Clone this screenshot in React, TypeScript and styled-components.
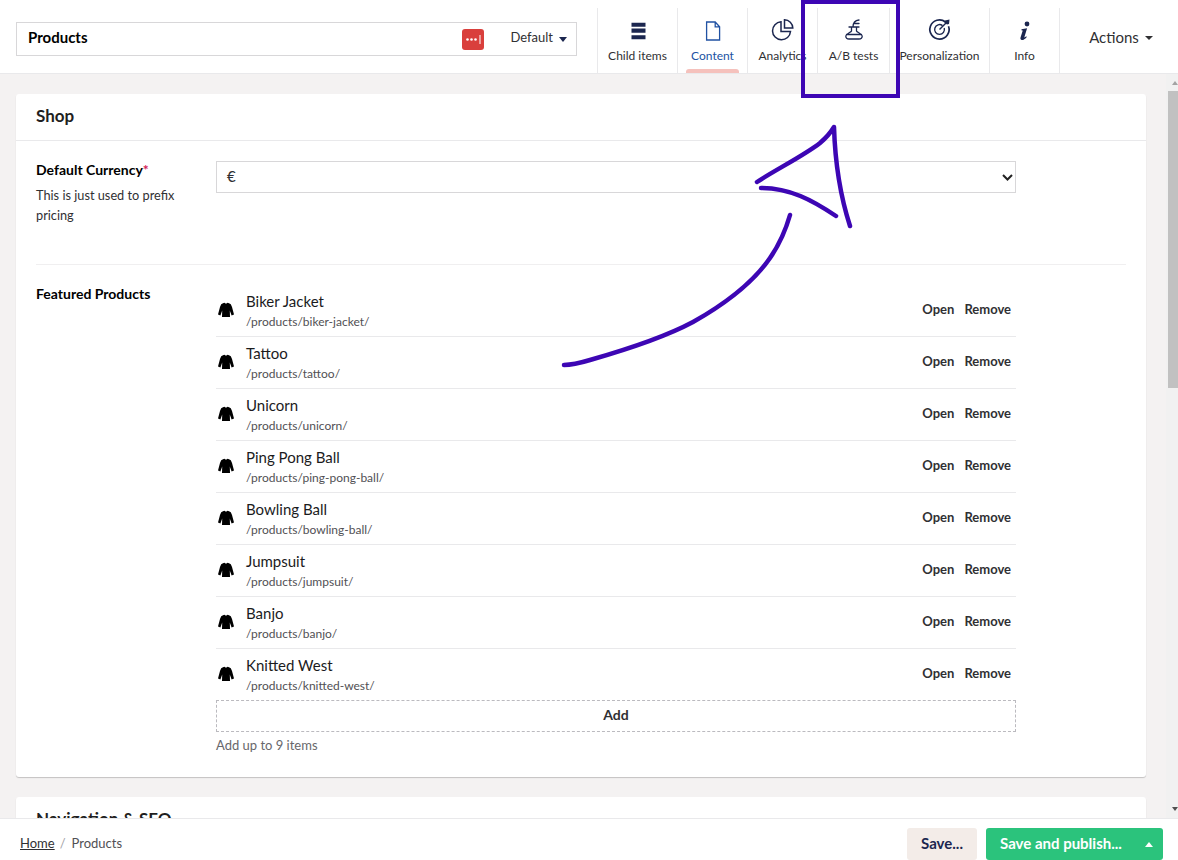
import React from "react";
import styled, { createGlobalStyle } from "styled-components";

const GlobalStyle = createGlobalStyle`
  html, body {
    margin: 0;
    height: 100%;
    overflow: hidden;
    background: #f4f2f2;
    font-family: Lato, "Open Sans", sans-serif;
    color: #1b264f;
  }
  * { box-sizing: border-box; }
`;

const Page = styled.div`
  position: relative;
  width: 1178px;
  height: 860px;
  display: flex;
  flex-direction: column;
  overflow: hidden;
`;

const Header = styled.header`
  flex: 0 0 74px;
  display: flex;
  background: #fff;
  border-bottom: 1px solid #e9e9eb;
`;

const NameBar = styled.div`
  width: 561px;
  height: 34px;
  margin: 22px 20px 0 16px;
  padding: 0 9px 0 11px;
  display: flex;
  align-items: center;
  border: 1px solid #d8d7d9;
`;

const NameText = styled.span`
  flex: 1;
  padding-bottom: 5px;
  font-size: 15px;
  font-weight: 700;
  color: #000;
`;

const LockBadge = styled.span`
  width: 22px;
  height: 21px;
  margin-right: 26px;
  border-radius: 3px;
  background: #d93f3c;
  display: flex;
  align-items: center;
  justify-content: center;
`;

const VariantText = styled.span`
  padding-bottom: 5px;
  font-size: 13px;
  color: #303033;
  margin-right: 6px;
`;

const Caret = styled.span<{ $up?: boolean; $color?: string }>`
  width: 0;
  height: 0;
  border-left: 4.5px solid transparent;
  border-right: 4.5px solid transparent;
  ${(p) => (p.$up ? "border-bottom" : "border-top")}: 5px solid ${(p) => p.$color || "#1b264f"};
`;

const ActionsCaret = styled(Caret)`
  margin: 2px 0 0 1px;
  border-left-width: 4px;
  border-right-width: 4px;
  border-top-width: 4px;
  border-top-color: #303033;
`;

const Tabs = styled.nav`
  display: flex;
  margin-top: 8px;
  height: 65px;
  border-left: 1px solid #e9e9eb;
`;

const Tab = styled.div<{ $width: number; $active?: boolean }>`
  position: relative;
  width: ${(p) => p.$width}px;
  display: flex;
  flex-direction: column;
  align-items: center;
  padding-top: 11px;
  border-right: 1px solid #e9e9eb;

  ${(p) =>
    p.$active &&
    `&::after {
      content: "";
      position: absolute;
      left: 8px;
      right: 8px;
      bottom: 0;
      height: 4px;
      background: #f5c1bc;
      border-radius: 3px 3px 0 0;
    }`}
`;

const TabIcon = styled.svg`
  width: 24px;
  height: 24px;
  display: block;
  overflow: visible;
`;

const TabLabel = styled.span`
  margin-top: 5px;
  font-size: 12px;
  line-height: 16px;
  white-space: nowrap;
  color: #303033;
`;

const ActiveLabel = styled(TabLabel)`
  color: #2152a3;
`;

const ActionsBox = styled.div`
  flex: 1;
  display: flex;
  align-items: center;
  justify-content: center;
  gap: 5px;
  padding-left: 4px;
  font-size: 15px;
  color: #303033;
`;

const Middle = styled.div`
  flex: 1;
  min-height: 0;
  display: flex;
`;

const Scroller = styled.main`
  flex: 1;
  min-width: 0;
  overflow: hidden;
  padding: 20px 20px 0 16px;
`;

const Scrollbar = styled.div`
  flex: 0 0 12px;
  display: flex;
  flex-direction: column;
  align-items: flex-end;
  background: #f1f1f1;
  padding-top: 7px;
`;

const ScrollThumb = styled.div`
  width: 10px;
  height: 297px;
  margin-top: 6px;
  background: #c1c1c1;
`;

const ScrollSpace = styled.div`
  flex: 1;
`;

const ScrollArrow = styled.span<{ $down?: boolean }>`
  width: 0;
  height: 0;
  border-left: 3.5px solid transparent;
  border-right: 3.5px solid transparent;
  ${(p) => (p.$down ? "border-top: 4px solid #505050; margin-bottom: 7px;" : "border-bottom: 4px solid #a3a3a3;")}
`;

const Card = styled.section`
  background: #fff;
  border-radius: 3px;
  box-shadow: 0 1px 1px rgba(0, 0, 0, 0.2);
  margin-bottom: 20px;
`;

const CardHeader = styled.div`
  height: 47px;
  padding: 0 20px 3px;
  display: flex;
  align-items: center;
  border-bottom: 1px solid #e9e9eb;
  font-size: 17px;
  font-weight: 700;
  color: #1f1f21;
`;

const CardBody = styled.div`
  padding: 20px 20px 23px;
`;

const Property = styled.div<{ $divided?: boolean }>`
  display: grid;
  grid-template-columns: 180px 800px;
  ${(p) => p.$divided && "padding-bottom: 39px; border-bottom: 1px solid #f0eff0; margin-bottom: 20px;"}
`;

const LabelCol = styled.div`
  padding-right: 30px;
`;

const PropLabel = styled.div`
  font-size: 14px;
  line-height: 18px;
  font-weight: 700;
  color: #000;
`;

const Required = styled.span`
  color: #d42054;
`;

const PropHelp = styled.div`
  margin-top: 6px;
  font-size: 12.75px;
  line-height: 20px;
  color: #303033;
`;

const SelectBox = styled.div`
  height: 32px;
  padding: 0 2px 0 10px;
  display: flex;
  align-items: center;
  justify-content: space-between;
  border: 1px solid #d8d7d9;
  font-size: 15px;
  color: #303033;
`;

const SelectValue = styled.span`
  padding-bottom: 2px;
`;

const ItemRow = styled.div`
  height: 52px;
  padding: 0 5px 4px 0;
  display: flex;
  align-items: center;
  border-bottom: 1px solid #e9e9eb;
  &:last-child {
    height: 51px;
    border-bottom: 0;
  }
`;

const ItemIcon = styled.svg`
  flex: 0 0 18px;
  width: 18px;
  height: 18px;
  margin: 0 11px 0 1px;
`;

const ItemText = styled.div`
  flex: 1;
  padding-top: 4px;
`;

const ItemName = styled.div`
  font-size: 15px;
  line-height: 22px;
  color: #1b1b1d;
`;

const ItemPath = styled.div`
  margin-top: 1px;
  font-size: 12px;
  line-height: 18px;
  color: #515054;
`;

const ItemAction = styled.span`
  margin-left: 10px;
  font-size: 13px;
  font-weight: 700;
  color: #303033;
`;

const AddButton = styled.div`
  height: 32px;
  padding-bottom: 3px;
  display: flex;
  align-items: center;
  justify-content: center;
  border: 1px dashed #bbbabf;
  font-size: 14px;
  font-weight: 700;
  color: #303033;
`;

const AddHelp = styled.div`
  margin-top: 4px;
  font-size: 13px;
  line-height: 18px;
  color: #68676b;
`;

const Footer = styled.footer`
  flex: 0 0 41px;
  padding: 9px 15px 0 20px;
  display: flex;
  background: #fff;
  border-top: 1px solid #e9e9eb;
`;

const Breadcrumbs = styled.div`
  flex: 1;
  display: flex;
  align-items: center;
  height: 30px;
  font-size: 13px;
  color: #515054;
`;

const Crumb = styled.a`
  color: #303033;
  text-decoration: underline;
`;

const CrumbSep = styled.span`
  margin: 0 6px 0 5px;
  color: #a2a1a6;
`;

const SaveButton = styled.div`
  width: 70px;
  height: 32px;
  margin-right: 9px;
  padding-bottom: 3px;
  display: flex;
  align-items: center;
  justify-content: center;
  background: #f3ece8;
  border-radius: 3px;
  font-size: 15px;
  font-weight: 700;
  color: #1b264f;
`;

const PublishButton = styled.div`
  width: 177px;
  height: 32px;
  padding: 0 10px 0 14px;
  display: flex;
  align-items: center;
  justify-content: space-between;
  background: #2bc37c;
  border-radius: 3px;
  font-size: 15px;
  font-weight: 700;
  color: #fff;
`;

const PublishText = styled.span`
  padding-bottom: 3px;
`;

const Annotation = styled.svg`
  position: absolute;
  left: 0;
  top: 0;
  width: 1178px;
  height: 860px;
  pointer-events: none;
`;

const Jacket = () => (
  <ItemIcon viewBox="0 0 18 18">
    <path
      fill="#000"
      d="M6 3.200L7.400 2.800L9 3.800L10.600 2.800L12 3.200L13.800 4.200L15 7L17 14.500L14.600 15.500L12.800 10.500L13 17L5 17L5.200 10.500L3.400 15.500L1 14.500L3 7L4.200 4.200Z"
    />
  </ItemIcon>
);

const items = [
  ["Biker Jacket", "/products/biker-jacket/"],
  ["Tattoo", "/products/tattoo/"],
  ["Unicorn", "/products/unicorn/"],
  ["Ping Pong Ball", "/products/ping-pong-ball/"],
  ["Bowling Ball", "/products/bowling-ball/"],
  ["Jumpsuit", "/products/jumpsuit/"],
  ["Banjo", "/products/banjo/"],
  ["Knitted West", "/products/knitted-west/"],
];

export default function App() {
  return (
    <Page>
      <GlobalStyle />
      <Header>
        <NameBar>
          <NameText>Products</NameText>
          <LockBadge>
            <svg width="17" height="9" viewBox="0 0 17 9">
              <circle cx="2.500" cy="4.500" r="1.300" fill="#fff" />
              <circle cx="6.500" cy="4.500" r="1.300" fill="#fff" />
              <circle cx="10.500" cy="4.500" r="1.300" fill="#fff" />
              <rect x="14.500" y="0" width="1" height="9" fill="#fff" />
            </svg>
          </LockBadge>
          <VariantText>Default</VariantText>
          <Caret />
        </NameBar>
        <Tabs>
          <Tab $width={80}>
            <TabIcon viewBox="0 0 24 24">
              <path fill="#1b264f" d="M5.500 3.700h14v4h-14zM5.500 9.600h14v4.100h-14zM5.500 16.200h14v4.100h-14z" />
            </TabIcon>
            <TabLabel>Child items</TabLabel>
          </Tab>
          <Tab $width={70} $active>
            <TabIcon viewBox="0 0 24 24">
              <path fill="none" stroke="#2152a3" strokeWidth="1.300" d="M5.600 3h8.600l4.400 4.800V21H5.600z M14.200 3v4.800h4.400" />
            </TabIcon>
            <ActiveLabel>Content</ActiveLabel>
          </Tab>
          <Tab $width={70}>
            <TabIcon viewBox="0 0 24 24">
              <path fill="none" stroke="#1b264f" strokeWidth="1.500" d="M10 2.800a9 9 0 1 0 9.500 9.700H10z" />
              <path fill="none" stroke="#1b264f" strokeWidth="1.500" d="M13.500 .7a8.500 8.500 0 0 1 8.300 8.300h-8.300z" />
            </TabIcon>
            <TabLabel>Analytics</TabLabel>
          </Tab>
          <Tab $width={72}>
            <TabIcon viewBox="0 0 24 24">
              <path
                fill="none"
                stroke="#1b264f"
                strokeWidth="1.300"
                strokeLinecap="round"
                d="M9.500 8V12C9 13.500 4 14.500 3.800 17C3.700 19 5 20 7 20H17C19 20 20.300 19 20.200 17C20 14.500 15 13.500 14.500 12V8M7 8H17M4.500 15.500H19.500M11 8C11 4 12.500 1.500 17 1M12 4.500H17"
              />
            </TabIcon>
            <TabLabel>A/B tests</TabLabel>
          </Tab>
          <Tab $width={100}>
            <TabIcon viewBox="0 0 24 24">
              <g fill="none" stroke="#1b264f">
                <path strokeWidth="1.700" d="M17.500 3A9.600 9.600 0 1 0 20.500 7.200" />
                <path strokeWidth="1.400" d="M14.500 6.600A4.900 4.900 0 1 0 16.200 9" />
                <path strokeWidth="1.400" d="M11.500 10.500L19 3" />
              </g>
              <path fill="#1b264f" d="M17 1.500L21.500 .5L21 5L19 5.500L16.500 3.500z" />
            </TabIcon>
            <TabLabel>Personalization</TabLabel>
          </Tab>
          <Tab $width={70}>
            <TabIcon viewBox="0 0 24 24">
              <circle cx="14" cy="5" r="2.400" fill="#1b264f" />
              <path fill="#1b264f" d="M8.500 10.200l5.600-.9-2.700 8.600c-.2.700.4.800 1.800-.6l.6.700c-2.200 2.600-3.800 3.300-5.200 3-1.200-.3-1.400-1.300-1-2.700l2-6.300c.2-.7-.3-.9-1.200-.6z" />
            </TabIcon>
            <TabLabel>Info</TabLabel>
          </Tab>
        </Tabs>
        <ActionsBox>
          Actions <ActionsCaret />
        </ActionsBox>
      </Header>
      <Middle>
        <Scroller>
          <Card>
            <CardHeader>Shop</CardHeader>
            <CardBody>
              <Property $divided>
                <LabelCol>
                  <PropLabel>
                    Default Currency<Required>*</Required>
                  </PropLabel>
                  <PropHelp>This is just used to prefix pricing</PropHelp>
                </LabelCol>
                <SelectBox>
                  <SelectValue>€</SelectValue>
                  <svg width="11" height="7" viewBox="0 0 11 7">
                    <path d="M1 1l4.500 4.500L10 1" fill="none" stroke="#222" strokeWidth="2" />
                  </svg>
                </SelectBox>
              </Property>
              <Property>
                <LabelCol>
                  <PropLabel>Featured Products</PropLabel>
                </LabelCol>
                <div>
                  <div>
                    {items.map(([name, path]) => (
                      <ItemRow key={path}>
                        <Jacket />
                        <ItemText>
                          <ItemName>{name}</ItemName>
                          <ItemPath>{path}</ItemPath>
                        </ItemText>
                        <ItemAction>Open</ItemAction>
                        <ItemAction>Remove</ItemAction>
                      </ItemRow>
                    ))}
                  </div>
                  <AddButton>Add</AddButton>
                  <AddHelp>Add up to 9 items</AddHelp>
                </div>
              </Property>
            </CardBody>
          </Card>
          <Card>
            <CardHeader>Navigation &amp; SEO</CardHeader>
          </Card>
        </Scroller>
        <Scrollbar>
          <ScrollArrow />
          <ScrollThumb />
          <ScrollSpace />
          <ScrollArrow $down />
        </Scrollbar>
      </Middle>
      <Footer>
        <Breadcrumbs>
          <Crumb>Home</Crumb>
          <CrumbSep>/</CrumbSep>
          Products
        </Breadcrumbs>
        <SaveButton>Save...</SaveButton>
        <PublishButton>
          <PublishText>Save and publish...</PublishText>
          <Caret $up $color="#fff" />
        </PublishButton>
      </Footer>
      <Annotation viewBox="0 0 1178 860">
        <rect x="803" y="2" width="95" height="94" fill="none" stroke="#3d06b4" strokeWidth="4" />
        <g fill="none" stroke="#3d06b4" strokeWidth="4.500" strokeLinecap="round" strokeLinejoin="round">
          <path d="M564 365C572 365 580 363 590 360C625 350 665 337 693 322C725 304 752 284 770 258C781 242 786 229 790 215" />
          <path d="M757 182C775 170 805 155 820 143C827 137 831 132 834 127C835 160 840 195 850 226" />
          <path d="M761 188C790 188 812 200 836 216" />
        </g>
      </Annotation>
    </Page>
  );
}
